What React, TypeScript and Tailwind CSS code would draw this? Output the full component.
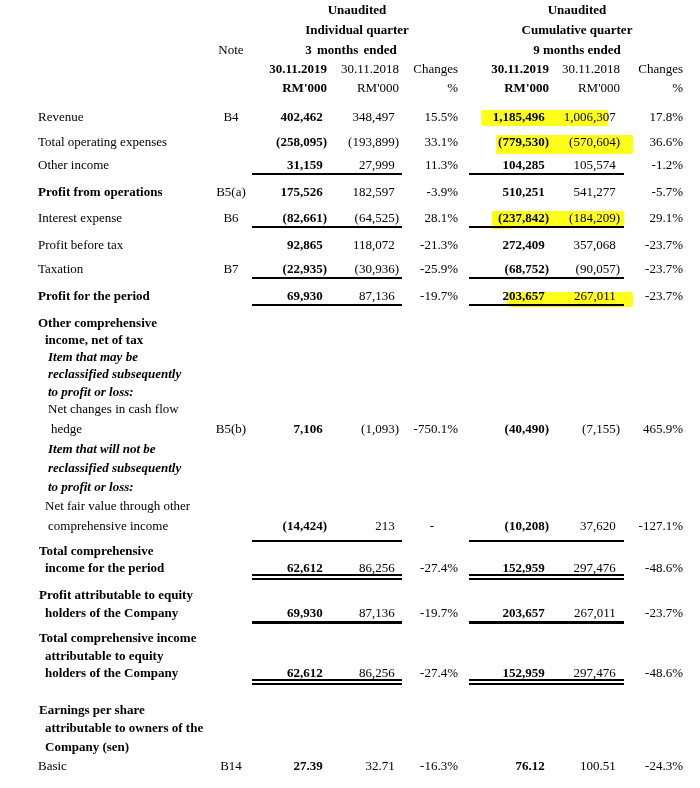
import React from "react";

type Line = {
  label?: string;
  ind?: string;
  style?: "b" | "bi" | "n";
  note?: string;
  v?: string[];
  mt: string;
  hl?: string[];
  dash?: boolean;
};

type Rule = { rule: "single" | "thick" | "double"; mt: string };

const grid =
  "grid grid-cols-[172px_42px_78px_72px_67px_83px_72px_59px] leading-[17px]";

const rows: (Line | Rule)[] = [
  {
    label: "Revenue",
    note: "B4",
    v: ["402,462", "348,497", "15.5%", "1,185,496", "1,006,307", "17.8%"],
    mt: "mt-[12px]",
    hl: ["left-[443px] top-[2px] w-[127px] h-[16px]"],
  },
  {
    label: "Total operating expenses",
    v: ["(258,095)", "(193,899)", "33.1%", "(779,530)", "(570,604)", "36.6%"],
    mt: "mt-[8px]",
    hl: ["left-[458px] top-[2px] w-[137px] h-[19px]"],
  },
  {
    label: "Other income",
    v: ["31,159", "27,999", "11.3%", "104,285", "105,574", "-1.2%"],
    mt: "mt-[6px]",
  },
  { rule: "single", mt: "mt-0" },
  {
    label: "Profit from operations",
    style: "b",
    note: "B5(a)",
    v: ["175,526", "182,597", "-3.9%", "510,251", "541,277", "-5.7%"],
    mt: "mt-[8px]",
  },
  {
    label: "Interest expense",
    note: "B6",
    v: ["(82,661)", "(64,525)", "28.1%", "(237,842)", "(184,209)", "29.1%"],
    mt: "mt-[9px]",
    hl: [
      "left-[454px] top-[2px] w-[132px] h-[15px]",
      "left-[454px] top-[2px] w-[20px] h-[18px]",
    ],
  },
  { rule: "single", mt: "mt-0" },
  {
    label: "Profit before tax",
    v: ["92,865", "118,072", "-21.3%", "272,409", "357,068", "-23.7%"],
    mt: "mt-[8px]",
  },
  {
    label: "Taxation",
    note: "B7",
    v: ["(22,935)", "(30,936)", "-25.9%", "(68,752)", "(90,057)", "-23.7%"],
    mt: "mt-[7px]",
  },
  { rule: "single", mt: "mt-0" },
  {
    label: "Profit for the period",
    style: "b",
    v: ["69,930", "87,136", "-19.7%", "203,657", "267,011", "-23.7%"],
    mt: "mt-[8px]",
    hl: ["left-[469px] top-[5px] w-[126px] h-[15px]"],
  },
  { rule: "single", mt: "mt-0" },
  { label: "Other comprehensive", style: "b", mt: "mt-[8px]" },
  { label: "income, net of tax", style: "b", ind: "pl-[7px]", mt: "mt-0" },
  { label: "Item that may be", style: "bi", ind: "pl-[10px]", mt: "mt-0" },
  { label: "reclassified subsequently", style: "bi", ind: "pl-[10px]", mt: "mt-0" },
  { label: "to profit or loss:", style: "bi", ind: "pl-[10px]", mt: "mt-[1px]" },
  { label: "Net changes in cash flow", ind: "pl-[10px]", mt: "mt-0" },
  {
    label: "hedge",
    ind: "pl-[13px]",
    note: "B5(b)",
    v: ["7,106", "(1,093)", "-750.1%", "(40,490)", "(7,155)", "465.9%"],
    mt: "mt-[3px]",
  },
  { label: "Item that will not be", style: "bi", ind: "pl-[10px]", mt: "mt-[3px]" },
  { label: "reclassified subsequently", style: "bi", ind: "pl-[10px]", mt: "mt-[2px]" },
  { label: "to profit or loss:", style: "bi", ind: "pl-[10px]", mt: "mt-[2px]" },
  { label: "Net fair value through other", ind: "pl-[7px]", mt: "mt-[2px]" },
  {
    label: "comprehensive income",
    ind: "pl-[10px]",
    v: ["(14,424)", "213", "-", "(10,208)", "37,620", "-127.1%"],
    mt: "mt-[3px]",
    dash: true,
  },
  { rule: "single", mt: "mt-[6px]" },
  { label: "Total comprehensive", style: "b", ind: "pl-[1px]", mt: "mt-0" },
  {
    label: "income for the period",
    style: "b",
    ind: "pl-[7px]",
    v: ["62,612", "86,256", "-27.4%", "152,959", "297,476", "-48.6%"],
    mt: "mt-0",
  },
  { rule: "double", mt: "-mt-[2px]" },
  { label: "Profit attributable to equity", style: "b", ind: "pl-[1px]", mt: "mt-[6px]" },
  {
    label: "holders of the Company",
    style: "b",
    ind: "pl-[7px]",
    v: ["69,930", "87,136", "-19.7%", "203,657", "267,011", "-23.7%"],
    mt: "mt-[1px]",
  },
  { rule: "thick", mt: "mt-0" },
  { label: "Total comprehensive income", style: "b", ind: "pl-[1px]", mt: "mt-[5px]" },
  { label: "attributable to equity", style: "b", ind: "pl-[7px]", mt: "mt-[1px]" },
  {
    label: "holders of the Company",
    style: "b",
    ind: "pl-[7px]",
    v: ["62,612", "86,256", "-27.4%", "152,959", "297,476", "-48.6%"],
    mt: "mt-0",
  },
  { rule: "double", mt: "-mt-[2px]" },
  { label: "Earnings per share", style: "b", ind: "pl-[1px]", mt: "mt-[16px]" },
  { label: "attributable to owners of the", style: "b", ind: "pl-[7px]", mt: "mt-[1px]" },
  { label: "Company (sen)", style: "b", ind: "pl-[7px]", mt: "mt-[2px]" },
  {
    label: "Basic",
    note: "B14",
    v: ["27.39", "32.71", "-16.3%", "76.12", "100.51", "-24.3%"],
    mt: "mt-[2px]",
  },
];

function Num({ text, bold }: { text: string; bold?: boolean }) {
  const neg = text.startsWith("(");
  return (
    <span className={bold ? "font-bold" : ""}>
      {text}
      {!neg && <span className="invisible">)</span>}
    </span>
  );
}

function RuleRow({ r }: { r: Rule }) {
  const seg =
    r.rule === "single"
      ? "border-t-2 border-black"
      : r.rule === "thick"
      ? "border-t-[3px] border-black"
      : "h-[6px] border-y-2 border-black";
  return (
    <div className={`grid grid-cols-[172px_42px_78px_72px_67px_83px_72px_59px] ${r.mt}`}>
      <div className={`col-start-3 col-span-2 ${seg}`} />
      <div className={`col-start-6 col-span-2 ${seg}`} />
    </div>
  );
}

function LineRow({ l }: { l: Line }) {
  const labelCls =
    l.style === "b" ? "font-bold" : l.style === "bi" ? "font-bold italic" : "";
  return (
    <div className={`${grid} relative ${l.mt}`}>
      {l.hl?.map((h, i) => (
        <div
          key={i}
          className={`absolute ${h} bg-[#ffff1a] mix-blend-multiply rounded-[2px]`}
        />
      ))}
      <div className={`whitespace-nowrap ${l.ind ?? ""} ${labelCls}`}>{l.label}</div>
      <div className="text-center">{l.note}</div>
      {l.v ? (
        <>
          <div className="text-right pr-[3px]">
            <Num text={l.v[0]} bold />
          </div>
          <div className="text-right pr-[3px]">
            <Num text={l.v[1]} />
          </div>
          <div className={`text-right ${l.dash ? "pr-[35px]" : "pr-[11px]"}`}>{l.v[2]}</div>
          <div className="text-right pr-[3px]">
            <Num text={l.v[3]} bold />
          </div>
          <div className="text-right pr-[4px]">
            <Num text={l.v[4]} />
          </div>
          <div className="text-right">{l.v[5]}</div>
        </>
      ) : null}
    </div>
  );
}

export default function App() {
  return (
    <div className="w-[700px] h-[788px] bg-white text-black overflow-hidden pl-[38px] font-['Liberation_Serif',serif] text-[13px]">
      {/* column headings */}
      <div className={`${grid} mt-[1px] font-bold`}>
        <div className="col-start-3 col-span-3 text-center pr-[7px]">Unaudited</div>
        <div className="col-start-6 col-span-3 text-center pl-[2px]">Unaudited</div>
      </div>
      <div className={`${grid} mt-[3px] font-bold`}>
        <div className="col-start-3 col-span-3 text-center pr-[7px]">Individual quarter</div>
        <div className="col-start-6 col-span-3 text-center pl-[2px]">Cumulative quarter</div>
      </div>
      <div className={`${grid} mt-[3px]`}>
        <div className="col-start-2 text-center">Note</div>
        <div className="col-span-3 text-center pr-[19px] font-bold [word-spacing:2px]">3 months ended</div>
        <div className="col-span-3 text-center pl-[2px] font-bold">9 months ended</div>
      </div>
      <div className={`${grid} mt-[2px]`}>
        <div className="col-start-3 text-right pr-[3px] font-bold">30.11.2019</div>
        <div className="text-right pr-[3px]">30.11.2018</div>
        <div className="text-right pr-[11px]">Changes</div>
        <div className="text-right pr-[3px] font-bold">30.11.2019</div>
        <div className="text-right pr-[4px]">30.11.2018</div>
        <div className="text-right">Changes</div>
      </div>
      <div className={`${grid} mt-[2px]`}>
        <div className="col-start-3 text-right pr-[3px] font-bold">RM'000</div>
        <div className="text-right pr-[3px]">RM'000</div>
        <div className="text-right pr-[11px]">%</div>
        <div className="text-right pr-[3px] font-bold">RM'000</div>
        <div className="text-right pr-[4px]">RM'000</div>
        <div className="text-right">%</div>
      </div>

      {rows.map((r, i) =>
        "rule" in r ? <RuleRow key={i} r={r} /> : <LineRow key={i} l={r} />
      )}
    </div>
  );
}
